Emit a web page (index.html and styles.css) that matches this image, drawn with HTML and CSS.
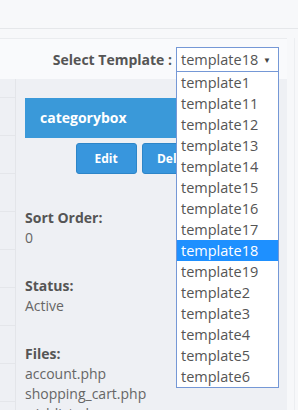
FILE: index.html
```html
<!DOCTYPE html>
<html lang="en">
<head>
    <meta charset="UTF-8">
    <meta name="viewport" content="width=device-width, initial-scale=1.0">
    <title>Template Boxes</title>
    <link rel="stylesheet" href="styles.css">
</head>
<body>

    <div class="topbar"></div>

    <div class="wrap">
        <div class="panel">
            <div class="panel-head">
                <label class="head-label">Select Template :</label>
                <div class="picker">
                    <div class="picker-value">template18<span class="caret">&#9660;</span></div>
                    <ul class="picker-list">
                        <li>template1</li>
                        <li>template11</li>
                        <li>template12</li>
                        <li>template13</li>
                        <li>template14</li>
                        <li>template15</li>
                        <li>template16</li>
                        <li>template17</li>
                        <li class="selected">template18</li>
                        <li>template19</li>
                        <li>template2</li>
                        <li>template3</li>
                        <li>template4</li>
                        <li>template5</li>
                        <li>template6</li>
                    </ul>
                </div>
            </div>

            <div class="panel-body">
                <div class="side">
                    <div class="side-row first"></div>
                    <div class="side-row"></div>
                    <div class="side-row"></div>
                    <div class="side-row"></div>
                    <div class="side-row"></div>
                    <div class="side-row"></div>
                    <div class="side-row"></div>
                    <div class="side-row"></div>
                    <div class="side-row"></div>
                </div>

                <div class="content">
                    <div class="box-title">categorybox</div>
                    <div class="box-actions">
                        <button type="button" class="btn">Edit</button>
                        <button type="button" class="btn">Delete</button>
                    </div>

                    <div class="field">
                        <div class="field-label">Sort Order:</div>
                        <div class="field-value">0</div>
                    </div>
                    <div class="field">
                        <div class="field-label">Status:</div>
                        <div class="field-value">Active</div>
                    </div>
                    <div class="field">
                        <div class="field-label">Files:</div>
                        <div class="field-value">account.php</div>
                        <div class="field-value">shopping_cart.php</div>
                        <div class="field-value">wishlist.php</div>
                    </div>
                </div>
            </div>
        </div>
        <div class="gutter"></div>
    </div>

</body>
</html>
```

FILE: styles.css
```css
body {
    font-family: "Open Sans", Arial, sans-serif;
    background-color: #f7f8fa;
    margin: 0;
    height: 410px;
    overflow: hidden;
}
.topbar {
    height: 28px;
    background: #f7f8fa;
    border-bottom: 1px solid #e5e7ea;
}
.wrap {
    display: flex;
    margin-top: 9px;
    padding-right: 3px;
}
.panel {
    flex: 1;
    border-top: 1px solid #eaecef;
}
.gutter {
    width: 7px;
    border-right: 1px solid #eceef1;
}
.panel-head {
    height: 40px;
    background: #f9fafc;
    display: flex;
    justify-content: flex-end;
    align-items: center;
    padding-right: 8px;
    position: relative;
    z-index: 2;
}
.head-label {
    font-size: 14px;
    font-weight: bold;
    color: #555;
    margin-right: 4px;
}
.picker {
    position: relative;
    width: 103px;
}
.picker-value {
    height: 23px;
    line-height: 23px;
    border: 1px solid #7598d6;
    background: #fff;
    color: #555;
    font-size: 14.5px;
    padding-left: 4px;
    position: relative;
}
.caret {
    position: absolute;
    right: 7px;
    top: 0;
    font-size: 8px;
    color: #444;
}
.picker-list {
    position: absolute;
    top: 24px;
    left: 0;
    right: 0;
    margin: 0;
    padding: 0;
    list-style: none;
    background: #fff;
    border: 1px solid #7598d6;
}
.picker-list li {
    height: 21px;
    line-height: 21px;
    padding-left: 4px;
    font-size: 14.5px;
    color: #555;
}
.picker-list li.selected {
    background: #1e90ff;
    color: #fff;
}
.panel-body {
    display: flex;
    background: #eef0f4;
    height: 340px;
}
.side {
    width: 15px;
    border-right: 1px solid #e3e5e9;
}
.side-row {
    height: 37px;
    border-bottom: 1px solid #e4e6ea;
}
.side-row.first {
    height: 18px;
}
.content {
    flex: 1;
    padding: 19px 25px 0 9px;
}
.box-title {
    height: 40px;
    line-height: 40px;
    background: #3a99d9;
    color: #fff;
    font-size: 14px;
    font-weight: bold;
    padding-left: 15px;
}
.box-actions {
    display: flex;
    justify-content: center;
    gap: 5px;
    margin-top: 5px;
}
.btn {
    width: 61px;
    height: 31px;
    background: #3896dd;
    border: 1px solid #2d85c8;
    border-radius: 3px;
    color: #fff;
    font-family: "Open Sans", Arial, sans-serif;
    font-size: 12px;
    font-weight: bold;
    padding: 0;
}
.btn + .btn {
    width: 70px;
}
.field {
    margin-top: 34px;
    line-height: 20px;
    font-size: 14px;
}
.field + .field {
    margin-top: 28px;
}
.field-label {
    font-weight: bold;
    color: #555;
}
.field-value {
    color: #666;
}
```
